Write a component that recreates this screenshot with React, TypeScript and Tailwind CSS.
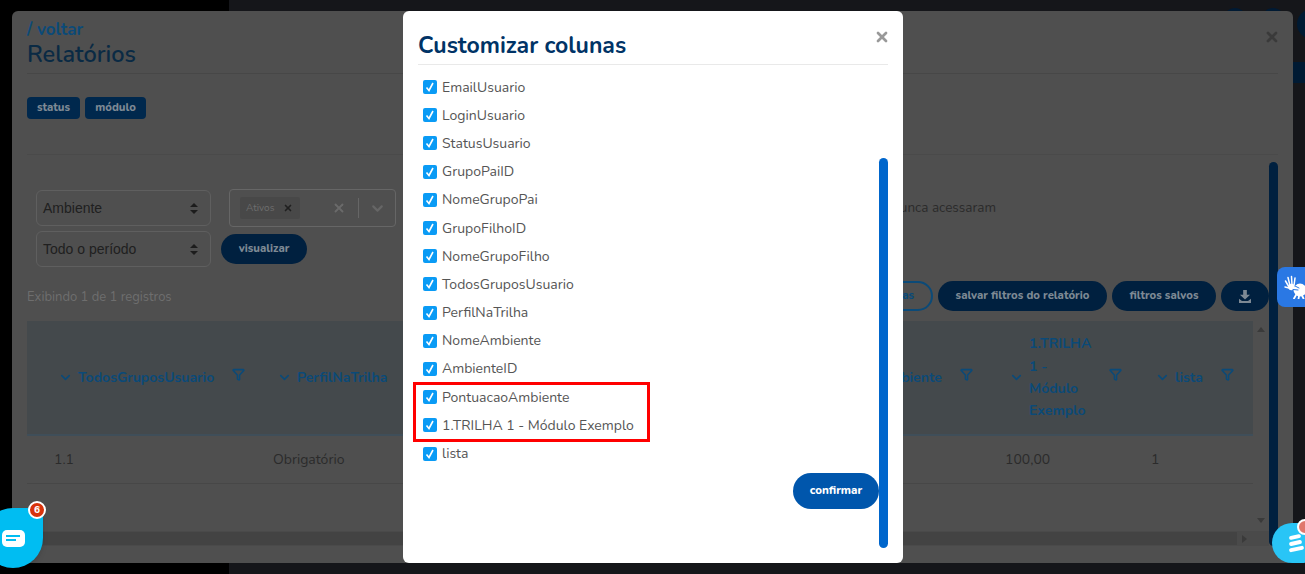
import React from 'react';
import { ChevronDown, Funnel, X } from 'lucide-react';

const columnas = [
  'EmailUsuario',
  'LoginUsuario',
  'StatusUsuario',
  'GrupoPaiID',
  'NomeGrupoPai',
  'GrupoFilhoID',
  'NomeGrupoFilho',
  'TodosGruposUsuario',
  'PerfilNaTrilha',
  'NomeAmbiente',
  'AmbienteID',
  'PontuacaoAmbiente',
  '1.TRILHA 1 - Módulo Exemplo',
  'lista',
];

function HeaderCell({ children }: { children: React.ReactNode }) {
  return (
    <div className="flex items-center pl-[31px]">
      <ChevronDown size={15} strokeWidth={2.5} className="text-[#0b4a78] shrink-0" />
      <div className="ml-[5px] pt-[1px] text-[14px] leading-[22.4px] font-bold text-[#0b4a78] whitespace-nowrap">
        {children}
      </div>
      <Funnel size={13} strokeWidth={2.8} className="ml-[18px] mb-[6px] text-[#0b4a78] shrink-0" />
    </div>
  );
}

function PillDark({ children, className }: { children: React.ReactNode; className?: string }) {
  return (
    <div className={`h-[30px] rounded-full bg-[#00203f] text-[#7d8994] text-[11.3px] font-extrabold flex items-center justify-center ${className}`}>
      {children}
    </div>
  );
}

function FakeSelect({ label }: { label: string }) {
  return (
    <div className="w-[175px] h-[36px] rounded-[6px] border border-[#5f5f5f] flex items-center justify-between pl-[6px] pr-[12px] font-['Liberation_Sans',sans-serif] text-[14px] text-[#202020]">
      {label}
      <svg width="8" height="11" viewBox="0 0 8 11" fill="#1c1c1c">
        <path d="M4 0 8 4H0zM4 11 0 7h8z" />
      </svg>
    </div>
  );
}

function Relatorios() {
  return (
    <div className="absolute left-[12px] top-[11px] w-[1281px] h-[552px] rounded-[6px] bg-[#4f4f4f] px-[15px] pt-[10px]">
      <div className="text-[17px] leading-[18px] font-bold text-[#0b4a78]">/ voltar</div>
      <div className="text-[23.5px] leading-[30px] font-semibold text-[#0a2a44]">Relatórios</div>
      <div className="mt-[4px] h-px bg-[#474747]"></div>
      <div className="mt-[23px] flex gap-[5px]">
        <div className="h-[22px] w-[53px] rounded-[4px] bg-[#00284d] text-[#7d8994] text-[11.3px] font-extrabold flex items-center justify-center">status</div>
        <div className="h-[22px] w-[61px] rounded-[4px] bg-[#00284d] text-[#7d8994] text-[11.3px] font-extrabold flex items-center justify-center">módulo</div>
      </div>
      <div className="mt-[35px] h-px bg-[#4a4a4a]"></div>

      <div className="mt-[34px] pl-[9px] flex">
        <div className="flex flex-col gap-[5px] pt-[1px]">
          <FakeSelect label="Ambiente" />
          <FakeSelect label="Todo o período" />
        </div>
        <div className="ml-[10px] flex flex-col">
          <div className="ml-[8px] w-[167px] h-[38px] rounded-[4px] border border-[#666666] flex items-center pl-[10px]">
            <div className="w-[60px] h-[22px] rounded-[2px] bg-[#484848] flex items-center pl-[6px] text-[10px] text-[#6e6e6e]">
              Ativos
              <X size={10} strokeWidth={4} className="ml-[8px] text-[#202020]" />
            </div>
            <X size={14} strokeWidth={3.2} className="ml-[32px] text-[#6a6a6a]" />
            <div className="ml-[12px] w-px h-[20px] bg-[#666666]"></div>
            <ChevronDown size={17} strokeWidth={3} className="ml-[10px] text-[#666666]" />
          </div>
          <PillDark className="mt-[7px] w-[86px]">visualizar</PillDark>
        </div>
        <div className="ml-auto mr-[282px] mt-[9px] text-[13.5px] text-[#2b2b2b]">nunca acessaram</div>
      </div>

      <div className="mt-[14px] flex items-center justify-between pr-[9px] h-[30px]">
        <div className="mt-[3px] text-[13px] text-[#6e6e6e]">Exibindo 1 de 1 registros</div>
        <div className="flex gap-[5px]">
          <div className="w-[62px] h-[30px] rounded-full border-[2px] border-[#0b4a78] text-[#0b4a78] text-[11.3px] font-extrabold flex items-center justify-end pr-[17px]">as</div>
          <PillDark className="w-[169px]">salvar filtros do relatório</PillDark>
          <PillDark className="w-[104px]">filtros salvos</PillDark>
          <PillDark className="w-[48px]">
            <svg width="12" height="13" viewBox="0 0 13 14" fill="#7d8994">
              <path d="M4.5 0h4v5H12L6.5 10.2 1 5h3.5zM0 9.5l3.2 2.5h6.6L13 9.5V14H0z" />
            </svg>
          </PillDark>
        </div>
      </div>

      <div className="mt-[10px] flex">
        <div className="w-[1242px] h-[225px] flex flex-col">
          <div className="flex-1 flex">
            <div className="w-[1226px]">
              <div className="h-[115px] bg-[#44494c] border-b-[2px] border-[#3f4e59] grid grid-cols-[219px_200px_313px_219px_146px_129px] items-center">
                <HeaderCell>TodosGruposUsuario</HeaderCell>
                <HeaderCell>PerfilNaTrilha</HeaderCell>
                <div></div>
                <HeaderCell>PontuacaoAmbiente</HeaderCell>
                <HeaderCell>
                  <div>1.TRILHA</div>
                  <div>1 -</div>
                  <div>Módulo</div>
                  <div>Exemplo</div>
                </HeaderCell>
                <HeaderCell>lista</HeaderCell>
              </div>
              <div className="h-[48px] border-b border-[#474747] grid grid-cols-[219px_200px_313px_219px_146px_129px] items-center text-[14px] text-[#2b2b2b]">
                <div className="pl-[27px]">1.1</div>
                <div className="pl-[27px]">Obrigatório</div>
                <div></div>
                <div></div>
                <div className="pl-[27px]">100,00</div>
                <div className="pl-[27px]">1</div>
              </div>
            </div>
            <div className="w-[16px] flex flex-col items-center justify-between pt-[6px] pb-[8px]">
              <div className="w-0 h-0 border-x-[4px] border-x-transparent border-b-[5px] border-b-[#3a3a3a]"></div>
              <div className="w-0 h-0 border-x-[4px] border-x-transparent border-t-[5px] border-t-[#3a3a3a]"></div>
            </div>
          </div>
          <div className="h-[15px] bg-[#4a4a4a] flex items-center">
            <div className="flex-1 h-[13px] bg-[#434343]"></div>
            <div className="ml-[5px] mr-[22px] w-0 h-0 border-y-[4px] border-y-transparent border-l-[5px] border-l-[#3a3a3a]"></div>
          </div>
        </div>
        <div className="w-[9px] -mt-[159px] h-[384px] rounded-full bg-[#00203f]"></div>
      </div>

      <X size={16} strokeWidth={4} className="absolute right-[13px] top-[18px] text-[#3a3a3a]" />
    </div>
  );
}

function CustomizarColunas() {
  return (
    <div className="absolute left-[403px] top-[11px] w-[500px] h-[552px] rounded-[6px] bg-white px-[15px] pt-[21px]">
      <div className="text-[23px] leading-[28px] font-bold text-[#003366]">Customizar colunas</div>
      <div className="mt-[4px] h-px bg-[#e9e9e9]"></div>
      <X size={16} strokeWidth={4} className="absolute right-[13px] top-[18px] text-[#999999]" />
      <div className="flex">
        <div className="flex-1 pl-[5px] pt-[8px]">
          {columnas.map((c) => (
            <div key={c} className="h-[28.2px] flex items-center text-[14px] text-[#555555]">
              <div className="w-[14px] h-[14px] rounded-[2px] bg-[#0a9bf5] flex items-center justify-center">
                <svg width="10" height="10" viewBox="0 0 10 10" fill="none" stroke="white" strokeWidth="1.6">
                  <path d="M1.5 5.5 4 8.5 8 1" />
                </svg>
              </div>
              <span className="ml-[5px] whitespace-nowrap">{c}</span>
            </div>
          ))}
          <div className="mt-[5px] flex justify-end">
            <div className="w-[86px] h-[36px] rounded-full bg-[#0056ac] text-white text-[11.5px] font-extrabold flex items-center justify-center">confirmar</div>
          </div>
        </div>
        <div className="w-[9px] h-[390px] mt-[93px] rounded-full bg-[#0066cc] shrink-0"></div>
      </div>
      <div className="absolute left-[10px] top-[371px] w-[237px] h-[60px] border-[3px] border-[#ff0000]"></div>
    </div>
  );
}

export default function App() {
  return (
    <div className='relative w-[1305px] h-[574px] overflow-hidden bg-[#15161a] font-["Nunito","Lato","Noto_Sans",sans-serif]'>
      <div className="h-full w-[229px] bg-black"></div>
      {/* restos da barra do topo, atras do modal */}
      <div className="absolute right-0 top-[62px] w-[20px] h-[21px] bg-[#001a33]"></div>
      <div className="absolute left-[1223px] top-[8px] w-[24px] h-[24px] rounded-full bg-[#001a33]"></div>
      <div className="absolute left-[1261px] top-[8px] w-[24px] h-[24px] rounded-full bg-[#001a33]"></div>
      <div className="absolute left-[1297px] top-[9px] w-[30px] h-[30px] rounded-full bg-[#001a33]"></div>
      <Relatorios />
      <CustomizarColunas />

      {/* flutuantes */}
      <div className="absolute left-[1277px] top-[267px] w-[40px] h-[40px] rounded-l-[8px] bg-[#2a78e4] pl-[7px] pt-[8px]">
        <svg width="24" height="24" viewBox="0 0 24 24" fill="white" stroke="white" strokeLinecap="round">
          <path strokeWidth="1.5" d="M5 12 1.5 6M6 10.5 4 2.5M8 10 7.5 1.5M10 10.5 11 3M5 13 1 12" />
          <circle cx="7.5" cy="12" r="3.2" stroke="none" />
          <circle cx="16" cy="15" r="6.5" stroke="none" />
          <path strokeWidth="1.8" d="M12 20 10 23.5M15 21 14.5 24M18 20.5 19.5 23.5" />
          <path stroke="#2a78e4" strokeWidth="1" fill="none" d="M9 14.5 14 15M11 11 15 13" />
        </svg>
      </div>

      <div className="absolute left-[-17px] top-[508px] w-[60px] h-[60px] rounded-full rounded-tr-[12px] bg-[#00bdf2] shadow-md flex items-center justify-center">
        <div className="w-[23px] h-[17px] rounded-[5px] bg-white flex flex-col justify-center gap-[2px] pl-[4px]">
          <div className="w-[14px] h-[2px] bg-[#00bdf2]"></div>
          <div className="w-[10px] h-[2px] bg-[#00bdf2]"></div>
        </div>
      </div>
      <div className="absolute left-[28px] top-[501px] w-[18px] h-[18px] rounded-full bg-[#d9330c] border-[2px] border-white text-white text-[10px] font-extrabold flex items-center justify-center">6</div>

      <div className="absolute left-[1272px] top-[523px] w-[50px] h-[40px] rounded-[20px] bg-[#29c5f6] flex flex-col justify-center gap-[2px] pl-[17px]">
        <div className="w-[12px] h-[4px] rounded-full bg-white -rotate-12"></div>
        <div className="w-[13px] h-[4px] rounded-full bg-white -rotate-12"></div>
        <div className="w-[15px] h-[4px] rounded-full bg-white -rotate-12"></div>
      </div>
      <div className="absolute left-[1297px] top-[519px] w-[16px] h-[16px] rounded-full bg-[#e0776c] border-[2px] border-white"></div>
    </div>
  );
}
